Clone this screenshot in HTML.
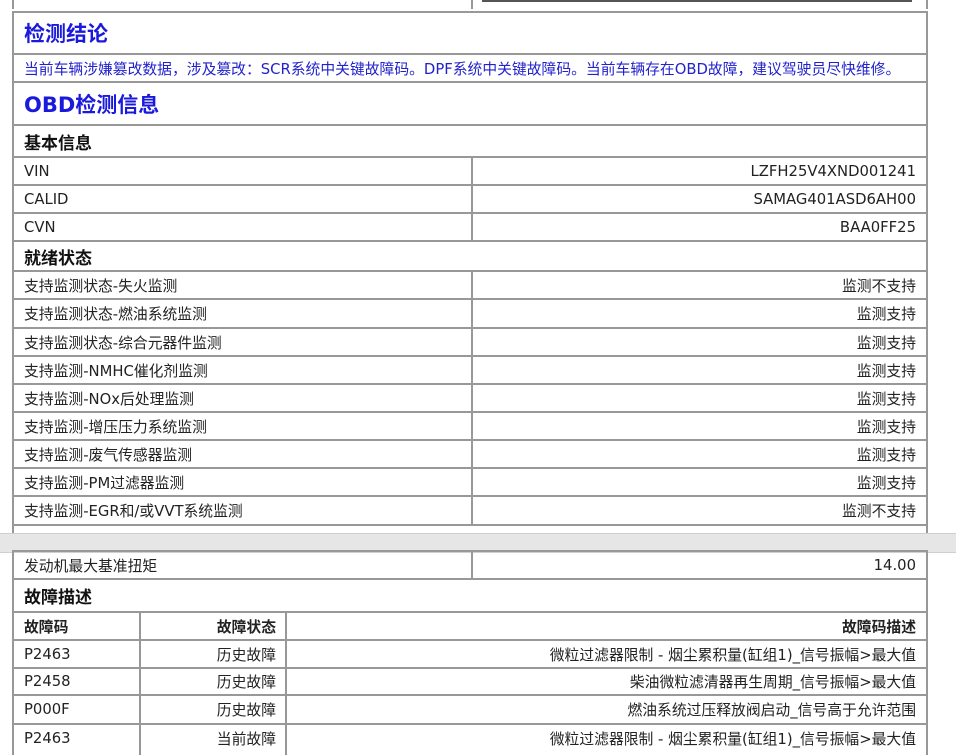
<!DOCTYPE html>
<html><head><meta charset="utf-8"><style>
body{margin:0;width:956px;height:746px;overflow:hidden;background:#fff;font-family:"DejaVu Sans","Noto Sans CJK SC",sans-serif;color:#222;position:relative}
.r{position:absolute;left:12px;width:912px;border-left:2px solid #989898;border-right:2px solid #989898;border-top:2px solid #989898;box-sizing:content-box}
.c{position:absolute;top:0;bottom:0;display:flex;align-items:center;font-size:14.8px;white-space:nowrap}
.l{left:10px}
.rt{right:10px;justify-content:flex-end}
.v{position:absolute;top:0;bottom:0;width:2px;background:#989898}
.h{font-size:17px;font-weight:bold;color:#111}
.band{position:absolute;left:0;width:956px;top:533px;height:18px;background:#e6e6e6;border-top:1px solid #cfcfcf;border-bottom:1px solid #cfcfcf}
</style></head><body>
<div class="r" style="top:-2px;height:11px;border-top:none"><div class="v" style="left:457px"></div><div style="position:absolute;left:468px;top:2px;width:430px;height:2px;background:#555"></div></div>
<div class="r" style="top:11px;height:40px"><div class="c l" style="font-size:21px;font-weight:bold;color:#1a1adc">检测结论</div></div>
<div class="r" style="top:53px;height:26px"><div class="c l" style="font-size:14.8px;color:#2222cc">当前车辆涉嫌篡改数据，涉及篡改：SCR系统中关键故障码。DPF系统中关键故障码。当前车辆存在OBD故障，建议驾驶员尽快维修。</div></div>
<div class="r" style="top:81px;height:41px"><div class="c l" style="font-size:21px;font-weight:bold;color:#1a1adc">OBD检测信息</div></div>
<div class="r" style="top:124px;height:30px"><div class="c l h">基本信息</div></div>
<div class="r" style="top:156px;height:26px"><div class="v" style="left:457px"></div><div class="c l">VIN</div><div class="c rt">LZFH25V4XND001241</div></div>
<div class="r" style="top:184px;height:26px"><div class="v" style="left:457px"></div><div class="c l">CALID</div><div class="c rt">SAMAG401ASD6AH00</div></div>
<div class="r" style="top:212px;height:26px"><div class="v" style="left:457px"></div><div class="c l">CVN</div><div class="c rt">BAA0FF25</div></div>
<div class="r" style="top:240px;height:28px"><div class="c l h">就绪状态</div></div>
<div class="r" style="top:270px;height:26px"><div class="v" style="left:457px"></div><div class="c l">支持监测状态-失火监测</div><div class="c rt">监测不支持</div></div>
<div class="r" style="top:298px;height:27px"><div class="v" style="left:457px"></div><div class="c l">支持监测状态-燃油系统监测</div><div class="c rt">监测支持</div></div>
<div class="r" style="top:327px;height:26px"><div class="v" style="left:457px"></div><div class="c l">支持监测状态-综合元器件监测</div><div class="c rt">监测支持</div></div>
<div class="r" style="top:355px;height:26px"><div class="v" style="left:457px"></div><div class="c l">支持监测-NMHC催化剂监测</div><div class="c rt">监测支持</div></div>
<div class="r" style="top:383px;height:26px"><div class="v" style="left:457px"></div><div class="c l">支持监测-NOx后处理监测</div><div class="c rt">监测支持</div></div>
<div class="r" style="top:411px;height:26px"><div class="v" style="left:457px"></div><div class="c l">支持监测-增压压力系统监测</div><div class="c rt">监测支持</div></div>
<div class="r" style="top:439px;height:26px"><div class="v" style="left:457px"></div><div class="c l">支持监测-废气传感器监测</div><div class="c rt">监测支持</div></div>
<div class="r" style="top:467px;height:26px"><div class="v" style="left:457px"></div><div class="c l">支持监测-PM过滤器监测</div><div class="c rt">监测支持</div></div>
<div class="r" style="top:495px;height:27px"><div class="v" style="left:457px"></div><div class="c l">支持监测-EGR和/或VVT系统监测</div><div class="c rt">监测不支持</div></div>
<div class="r" style="top:524px;height:10px"></div>
<div class="band"></div>
<div class="r" style="top:550px;height:26px"><div class="v" style="left:457px"></div><div class="c l">发动机最大基准扭矩</div><div class="c rt">14.00</div></div>
<div class="r" style="top:578px;height:31px"><div class="c l h">故障描述</div></div>
<div class="r" style="top:611px;height:26px"><div class="v" style="left:125px"></div><div class="v" style="left:271px"></div><div class="c l" style="font-weight:bold">故障码</div><div class="c" style="right:650px;font-weight:bold">故障状态</div><div class="c rt" style="font-weight:bold">故障码描述</div></div>
<div class="r" style="top:639px;height:26px"><div class="v" style="left:125px"></div><div class="v" style="left:271px"></div><div class="c l">P2463</div><div class="c" style="right:650px">历史故障</div><div class="c rt">微粒过滤器限制 - 烟尘累积量(缸组1)_信号振幅&gt;最大值</div></div>
<div class="r" style="top:667px;height:25px"><div class="v" style="left:125px"></div><div class="v" style="left:271px"></div><div class="c l">P2458</div><div class="c" style="right:650px">历史故障</div><div class="c rt">柴油微粒滤清器再生周期_信号振幅&gt;最大值</div></div>
<div class="r" style="top:694px;height:27px"><div class="v" style="left:125px"></div><div class="v" style="left:271px"></div><div class="c l">P000F</div><div class="c" style="right:650px">历史故障</div><div class="c rt">燃油系统过压释放阀启动_信号高于允许范围</div></div>
<div class="r" style="top:723px;height:30px"><div class="v" style="left:125px"></div><div class="v" style="left:271px"></div><div class="c l" style="top:-4px">P2463</div><div class="c" style="right:650px;top:-4px">当前故障</div><div class="c rt" style="top:-4px">微粒过滤器限制 - 烟尘累积量(缸组1)_信号振幅&gt;最大值</div></div>
</body></html>
